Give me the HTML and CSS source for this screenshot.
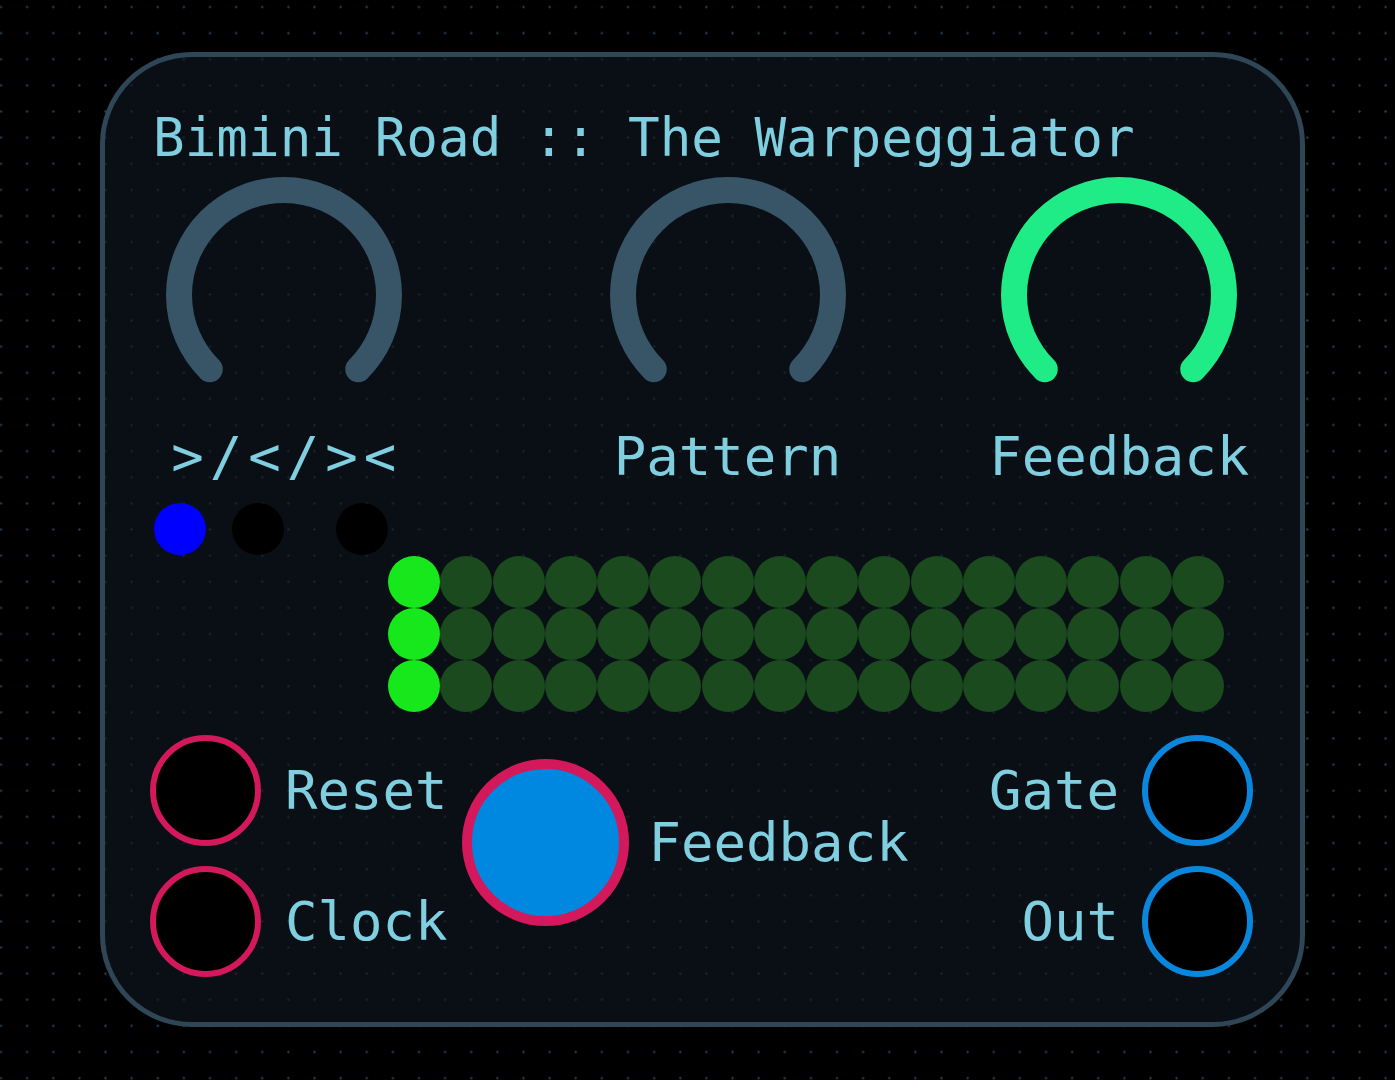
FILE: index.html
```html
<!DOCTYPE html>
<html lang="en">
<head>
<meta charset="utf-8">
<title>Bimini Road :: The Warpeggiator</title>
<link rel="stylesheet" href="styles.css">
</head>
<body>
<div class="panel">
  <h1 class="title">Bimini Road :: The Warpeggiator</h1>

  <div class="knobs">
    <div class="knob">
      <svg class="dial" width="240" height="215" viewBox="0 0 240 215"><path d="M45.75 194.25 A105 105 0 1 1 194.25 194.25" /></svg>
      <div class="label label-wide">&gt;/&lt;/&gt;&lt;</div>
    </div>
    <div class="knob knob-pattern">
      <svg class="dial" width="240" height="215" viewBox="0 0 240 215"><path d="M45.75 194.25 A105 105 0 1 1 194.25 194.25" /></svg>
      <div class="label">Pattern</div>
    </div>
    <div class="knob knob-feedback">
      <svg class="dial dial-on" width="240" height="215" viewBox="0 0 240 215"><path d="M45.75 194.25 A105 105 0 1 1 194.25 194.25" /></svg>
      <div class="label">Feedback</div>
    </div>
  </div>

  <div class="modes">
    <span class="dot dot-blue"></span>
    <span class="dot dot-off"></span>
    <span class="dot dot-off dot-far"></span>
  </div>

  <div class="matrix">
    <span class="cell on"></span><span class="cell"></span><span class="cell"></span><span class="cell"></span><span class="cell"></span><span class="cell"></span><span class="cell"></span><span class="cell"></span><span class="cell"></span><span class="cell"></span><span class="cell"></span><span class="cell"></span><span class="cell"></span><span class="cell"></span><span class="cell"></span><span class="cell"></span>
    <span class="cell on"></span><span class="cell"></span><span class="cell"></span><span class="cell"></span><span class="cell"></span><span class="cell"></span><span class="cell"></span><span class="cell"></span><span class="cell"></span><span class="cell"></span><span class="cell"></span><span class="cell"></span><span class="cell"></span><span class="cell"></span><span class="cell"></span><span class="cell"></span>
    <span class="cell on"></span><span class="cell"></span><span class="cell"></span><span class="cell"></span><span class="cell"></span><span class="cell"></span><span class="cell"></span><span class="cell"></span><span class="cell"></span><span class="cell"></span><span class="cell"></span><span class="cell"></span><span class="cell"></span><span class="cell"></span><span class="cell"></span><span class="cell"></span>
  </div>

  <div class="io">
    <div class="inputs">
      <div class="port"><span class="jack jack-in"></span><span class="label">Reset</span></div>
      <div class="port"><span class="jack jack-in"></span><span class="label">Clock</span></div>
    </div>
    <div class="mix">
      <span class="button"></span>
      <span class="label">Feedback</span>
    </div>
    <div class="outputs">
      <div class="port"><span class="label">Gate</span><span class="jack jack-out"></span></div>
      <div class="port"><span class="label">Out</span><span class="jack jack-out"></span></div>
    </div>
  </div>
</div>
</body>
</html>
```

FILE: styles.css
```css
html, body {
  margin: 0;
  padding: 0;
}

body {
  width: 1395px;
  height: 1080px;
  overflow: hidden;
  box-sizing: border-box;
  padding: 52px 0 0 100px;
  background:
    radial-gradient(circle at center, #24394a 0, #24394a 0.9px, transparent 1.5px) -12.07px -6.07px / 26.135px 26.135px fixed,
    #000;
  font-family: "DejaVu Sans Mono", "Liberation Mono", monospace;
  color: #7fcfe0;
}

.panel {
  width: 1205px;
  height: 975px;
  box-sizing: border-box;
  border: 5px solid #2e4656;
  border-radius: 92px;
  padding: 54px 47px 0 45px;
  background:
    radial-gradient(circle at center, #18232d 0, #18232d 0.9px, transparent 1.5px) -12.07px -6.07px / 26.135px 26.135px fixed,
    #0a0f15;
}

.title {
  margin: 0;
  padding-left: 3px;
  font-size: 52.6px;
  font-weight: normal;
  line-height: 54px;
  white-space: nowrap;
}

.label {
  font-size: 54px;
  line-height: 54px;
  white-space: nowrap;
}

.knobs {
  display: flex;
  margin-top: 10px;
}

.knob {
  width: 268px;
  display: flex;
  flex-direction: column;
  align-items: center;
}

.knob-pattern {
  margin-left: 176px;
}

.knob-feedback {
  margin-left: 124px;
}

.dial {
  display: block;
}

.dial path {
  fill: none;
  stroke: #385467;
  stroke-width: 26;
  stroke-linecap: round;
}

.dial-on path {
  stroke: #1fec86;
}

.knob .label {
  margin-top: 40px;
}

.label-wide {
  letter-spacing: 6px;
  padding-left: 6px;
}

.modes {
  display: flex;
  margin: 19px 0 0 4px;
  height: 52px;
}

.dot {
  width: 52px;
  height: 52px;
  border-radius: 50%;
  margin-right: 26px;
}

.dot-blue {
  background: #0000ff;
}

.dot-off {
  background: #000;
}

.dot-far {
  margin-left: 26px;
}

.matrix {
  display: grid;
  grid-template-columns: repeat(16, 52.25px);
  grid-auto-rows: 52px;
  margin: 1px 0 0 238px;
  width: 836px;
}

.cell {
  width: 52px;
  height: 52px;
  border-radius: 50%;
  background: #1a4a1e;
}

.cell.on {
  background: #17e81b;
}

.io {
  display: flex;
  align-items: flex-start;
  margin-top: 23px;
}

.inputs,
.outputs {
  display: flex;
  flex-direction: column;
  gap: 20px;
}

.outputs {
  margin-left: auto;
  align-items: flex-end;
}

.port {
  display: flex;
  align-items: center;
  gap: 24px;
}

.outputs .port {
  gap: 23px;
}

.jack {
  width: 111px;
  height: 111px;
  box-sizing: border-box;
  border-radius: 50%;
  background: #000;
}

.jack-in {
  border: 6.5px solid #d3185b;
}

.jack-out {
  border: 6.5px solid #0a87dc;
}

.mix {
  display: flex;
  align-items: center;
  gap: 20px;
  margin: 24px 0 0 14px;
}

.button {
  width: 167px;
  height: 167px;
  box-sizing: border-box;
  border-radius: 50%;
  border: 10.5px solid #d3185b;
  background: #0087e0;
}
```
